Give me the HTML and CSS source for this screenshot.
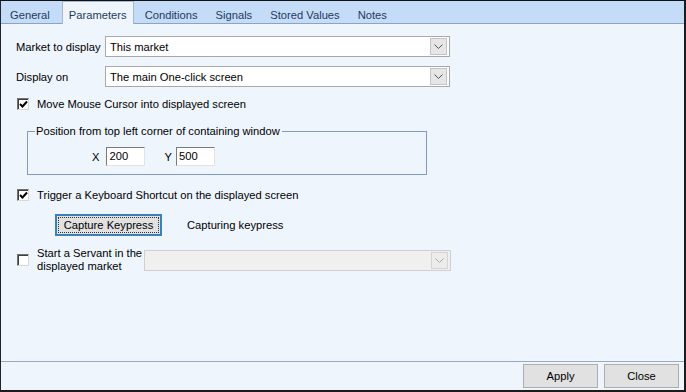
FILE: index.html
```html
<!DOCTYPE html>
<html lang="en">
<head>
    <meta charset="UTF-8">
    <title>Parameters</title>
    <link rel="stylesheet" href="styles.css">
</head>
<body>
    <div class="window">
        <!-- Tabs -->
        <div class="tabs">
            <div class="tab">General</div>
            <div class="tab active">Parameters</div>
            <div class="tab">Conditions</div>
            <div class="tab">Signals</div>
            <div class="tab">Stored Values</div>
            <div class="tab">Notes</div>
        </div>

        <!-- Tab page -->
        <div class="page">
            <div class="field-row">
                <span class="field-label">Market to display</span>
                <div class="combo">
                    <span>This market</span>
                    <span class="combo-button"><svg width="9" height="5" viewBox="0 0 9 5"><path d="M0.5 0.5 L4.5 4.5 L8.5 0.5" fill="none" stroke="#555" stroke-width="1"/></svg></span>
                </div>
            </div>
            <div class="field-row">
                <span class="field-label">Display on</span>
                <div class="combo">
                    <span>The main One-click screen</span>
                    <span class="combo-button"><svg width="9" height="5" viewBox="0 0 9 5"><path d="M0.5 0.5 L4.5 4.5 L8.5 0.5" fill="none" stroke="#555" stroke-width="1"/></svg></span>
                </div>
            </div>

            <label class="check-row first">
                <span class="checkbox checked"><svg width="9" height="9" viewBox="0 0 9 9"><path d="M1 4 L3.5 6.5 L8 1.5" fill="none" stroke="#000" stroke-width="2"/></svg></span>
                <span>Move Mouse Cursor into displayed screen</span>
            </label>

            <fieldset class="group">
                <legend>Position from top left corner of containing window</legend>
                <div class="coords">
                    <span>X</span><span class="textbox">200</span>
                    <span class="coord-gap">Y</span><span class="textbox">500</span>
                </div>
            </fieldset>

            <label class="check-row second">
                <span class="checkbox checked"><svg width="9" height="9" viewBox="0 0 9 9"><path d="M1 4 L3.5 6.5 L8 1.5" fill="none" stroke="#000" stroke-width="2"/></svg></span>
                <span>Trigger a Keyboard Shortcut on the displayed screen</span>
            </label>

            <div class="capture-row">
                <button class="capture-button"><span class="focus-rect">Capture Keypress</span></button>
                <span class="capture-status">Capturing keypress</span>
            </div>

            <div class="servant-row">
                <span class="checkbox"></span>
                <span class="servant-text">Start a Servant in the<br>displayed market</span>
                <div class="combo disabled">
                    <span></span>
                    <span class="combo-button"><svg width="9" height="5" viewBox="0 0 9 5"><path d="M0.5 0.5 L4.5 4.5 L8.5 0.5" fill="none" stroke="#aaa" stroke-width="1"/></svg></span>
                </div>
            </div>
        </div>

        <!-- Footer -->
        <div class="footer">
            <button class="footer-button">Apply</button>
            <button class="footer-button">Close</button>
        </div>
    </div>
</body>
</html>
```

FILE: styles.css
```css
/* General */
body {
    margin: 0;
    padding: 0;
    font-family: 'Liberation Sans', Arial, sans-serif;
    font-size: 11.2px;
    color: #000;
    background-color: #eef5fd;
}

.window {
    width: 686px;
    height: 392px;
    box-sizing: border-box;
    border-top: 1px solid #111;
    border-left: 1px solid #1d2330;
    border-right: 2px solid #1b1b1b;
    border-bottom: 2px solid #1b1b1b;
    display: flex;
    flex-direction: column;
    background-color: #eef5fd;
}

/* Tabs */
.tabs {
    height: 22px;
    flex-shrink: 0;
    display: flex;
    align-items: flex-end;
    padding-left: 0;
    background-color: #c5dcf8;
    border-bottom: 1px solid #8ea3bd;
}

.tab {
    height: 20px;
    line-height: 20px;
    padding: 2px 9px 0 9px;
    color: #1e3a5c;
    box-sizing: border-box;
    white-space: nowrap;
}

.tab.active {
    height: 23px;
    line-height: 22px;
    background-color: #eef5fd;
    border: 1px solid #a6b9d0;
    border-bottom: none;
    padding: 2px 6px 0 6px;
    margin: 0 2px -1px 3px;
}

/* Tab page */
.page {
    flex: 1;
    border-bottom: 1px solid #9aa9bb;
    padding: 12px 0 0 15px;
}

.field-row {
    display: flex;
    align-items: center;
    height: 21px;
    margin-bottom: 9px;
}

.field-label {
    width: 89px;
    flex-shrink: 0;
    white-space: nowrap;
}

.combo {
    width: 345px;
    height: 21px;
    box-sizing: border-box;
    border: 1px solid #a9a9a9;
    background-color: #fff;
    display: flex;
    align-items: center;
    justify-content: space-between;
    padding-left: 4px;
    padding-right: 2px;
}

.combo-button {
    width: 15px;
    height: 15px;
    border: 1px solid #c4c4c4;
    background-color: #e6e6e6;
    display: flex;
    align-items: center;
    justify-content: center;
}

.combo.disabled {
    background-color: #f0f0f0;
    border-color: #cfcfcf;
}

.combo.disabled .combo-button {
    background-color: #ececec;
    border-color: #d4d4d4;
}

/* Checkboxes */
.check-row {
    display: flex;
    align-items: center;
    gap: 8px;
    padding-left: 1px;
}

.check-row.first {
    margin-top: 11px;
}

.check-row.second {
    margin-top: 14px;
}

.checkbox {
    width: 12px;
    height: 12px;
    box-sizing: border-box;
    background-color: #fff;
    border-top: 1px solid #707070;
    border-left: 1px solid #707070;
    border-right: 1px solid #d8d8d8;
    border-bottom: 1px solid #d8d8d8;
    box-shadow: inset 1px 1px 0 #404040;
    display: flex;
    align-items: center;
    justify-content: center;
    flex-shrink: 0;
}

/* Group box */
.group {
    width: 400px;
    height: 50px;
    box-sizing: border-box;
    margin: 15px 0 0 11px;
    padding: 0;
    border: 1px solid #7f9cbf;
}

.group legend {
    padding: 0 2px 0 1px;
    margin-left: 7px;
}

.coords {
    display: flex;
    align-items: center;
    padding-left: 64px;
    margin-top: 10px;
}

.coords span:first-child {
    margin-right: 7px;
}

.textbox {
    width: 39px;
    height: 19px;
    box-sizing: border-box;
    background-color: #fff;
    border-top: 1px solid #7a7a7a;
    border-left: 1px solid #7a7a7a;
    border-right: 1px solid #e3e3e3;
    border-bottom: 1px solid #e3e3e3;
    padding-left: 2px;
    line-height: 17px;
}

.coord-gap {
    margin-left: 19px;
    margin-right: 4px;
}

/* Capture */
.capture-row {
    display: flex;
    align-items: center;
    margin-top: 13px;
    padding-left: 39px;
}

.capture-button {
    width: 107px;
    height: 22px;
    box-sizing: border-box;
    border: 2px solid #3d80b8;
    background-color: #e1e1e1;
    padding: 1px;
    font-family: inherit;
    font-size: 11.2px;
    color: #000;
}

.focus-rect {
    display: block;
    height: 100%;
    box-sizing: border-box;
    border: 1px dotted #333;
    line-height: 14px;
}

.capture-status {
    margin-left: 25px;
}

/* Servant row */
.servant-row {
    display: flex;
    align-items: center;
    margin-top: 11px;
    padding-left: 1px;
}

.servant-text {
    margin-left: 8px;
    line-height: 13px;
    width: 107px;
    white-space: nowrap;
}

.servant-row .combo {
    width: 307px;
    height: 21px;
}

/* Footer */
.footer {
    height: 28px;
    flex-shrink: 0;
    display: flex;
    justify-content: flex-end;
    align-items: center;
    gap: 6px;
    padding-right: 5px;
}

.footer-button {
    width: 75px;
    height: 24px;
    background-color: #e1e1e1;
    border: 1px solid #adadad;
    font-family: inherit;
    font-size: 11.2px;
    color: #000;
}
```
